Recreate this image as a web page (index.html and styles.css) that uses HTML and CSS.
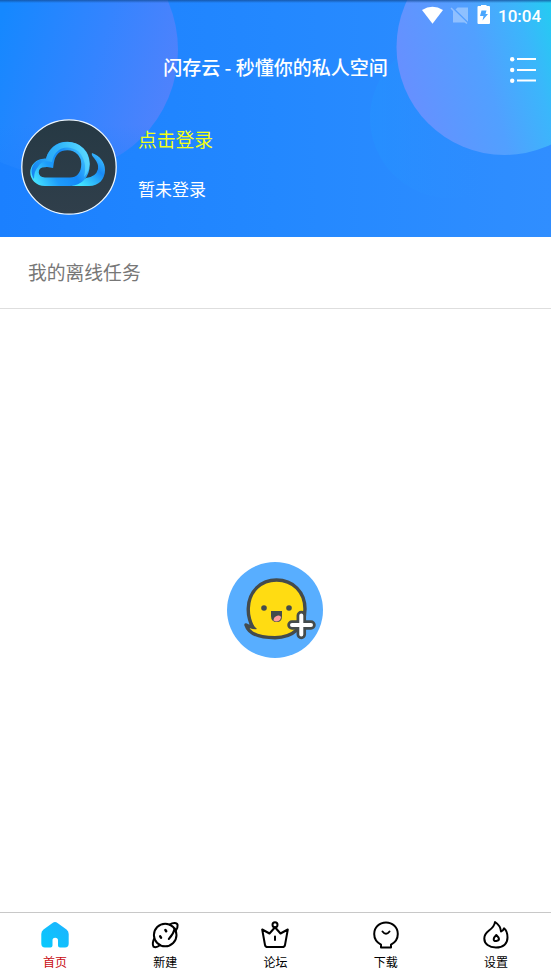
FILE: index.html
```html
<!DOCTYPE html>
<html lang="zh-CN">
<head>
<meta charset="utf-8">
<title>闪存云</title>
<link rel="stylesheet" href="styles.css">
</head>
<body>
<header class="hero">
  <svg class="hero-art" viewBox="0 0 551 237" aria-hidden="true">
    <defs>
      <linearGradient id="base" x1="0" y1="0" x2="1" y2="0"><stop offset="0" stop-color="#1b80ff"/><stop offset=".5" stop-color="#2388ff"/><stop offset="1" stop-color="#308eff"/></linearGradient>
      <linearGradient id="leftOrb" gradientUnits="userSpaceOnUse" x1="0" y1="20" x2="178" y2="75"><stop offset="0" stop-color="#1588ff"/><stop offset=".55" stop-color="#3484ff"/><stop offset="1" stop-color="#4f82fc"/></linearGradient>
      <linearGradient id="rightOrb" gradientUnits="userSpaceOnUse" x1="405" y1="85" x2="560" y2="40"><stop offset="0" stop-color="#6690ff"/><stop offset=".5" stop-color="#51a0ff"/><stop offset=".8" stop-color="#3bb6fb"/><stop offset="1" stop-color="#25cbf2"/></linearGradient>
      <linearGradient id="faintOrb" x1="0" y1="0" x2="1" y2="0"><stop offset="0" stop-color="#2494ff" stop-opacity=".45"/><stop offset=".7" stop-color="#2f90ff" stop-opacity="0"/></linearGradient>
      <linearGradient id="leftFade" x1="0" y1="0" x2="0" y2="1"><stop offset=".8" stop-color="#1b80ff" stop-opacity="0"/><stop offset="1" stop-color="#1b80ff" stop-opacity=".5"/></linearGradient>
      <linearGradient id="shade" x1="0" y1="0" x2="0" y2="1"><stop offset="0" stop-color="#124a93" stop-opacity=".75"/><stop offset="1" stop-color="#124a93" stop-opacity="0"/></linearGradient>
    </defs>
    <rect width="551" height="237" fill="url(#base)"/>
    <circle cx="54" cy="50" r="124" fill="url(#leftOrb)"/>
    <circle cx="54" cy="50" r="124" fill="url(#leftFade)"/>
    <circle cx="450" cy="118" r="80" fill="url(#faintOrb)"/>
    <circle cx="504.500" cy="47" r="108" fill="url(#rightOrb)"/>
    <rect width="551" height="3" fill="url(#shade)"/>
  </svg>
  <div class="status">
    <svg width="72" height="20" viewBox="0 0 72 20" fill="#fff">
      <path d="M0 5Q10.500-1.500 21 5L10.500 18.800Z"/>
      <path opacity=".35" d="M33.500 4.500l2-2H46v14.300zM28.500 3.500l1-1 16 15.500-1 1-2-1.500H31V6z"/>
      <path fill-rule="evenodd" d="M59 1h-2.500a1 1 0 0 0-1 1v16a1 1 0 0 0 1 1h10.500a1 1 0 0 0 1-1V2a1 1 0 0 0-1-1H64.500v-1H59zM59.500 5.500h5L63.500 9H66l-5.500 6.500 1-4.500H58z"/>
    </svg>
    <span class="clock">10:04</span>
  </div>
  <div class="titlebar">
    <h1 class="title">闪存云 - 秒懂你的私人空间</h1>
    <svg class="menu" width="28" height="28" viewBox="0 0 28 28" fill="#fff">
      <circle cx="3.200" cy="3.200" r="2.200"/><circle cx="3.200" cy="14" r="2.200"/><circle cx="3.200" cy="24.800" r="2.200"/>
      <path d="M8 2h19v2H8zM8 13h19v2H8zM8 23.600h19v2H8z"/>
    </svg>
  </div>
  <div class="profile">
    <svg class="avatar" width="96" height="96" viewBox="0 0 96 96">
      <defs>
        <linearGradient id="disc" x1="0" y1="0" x2="0" y2="1"><stop offset="0" stop-color="#263944"/><stop offset="1" stop-color="#303f4b"/></linearGradient>
        <linearGradient id="cloud" gradientUnits="userSpaceOnUse" x1="14" y1="66" x2="66" y2="35"><stop offset="0" stop-color="#48e7ff"/><stop offset=".35" stop-color="#1e9cfa"/><stop offset=".65" stop-color="#1588f7"/><stop offset="1" stop-color="#45caff"/></linearGradient>
        <linearGradient id="crest" gradientUnits="userSpaceOnUse" x1="10" y1="56" x2="68" y2="40"><stop offset="0" stop-color="#0869ef"/><stop offset=".35" stop-color="#2fb0f8"/><stop offset=".65" stop-color="#3cc4fb"/><stop offset="1" stop-color="#5fdcff"/></linearGradient>
        <linearGradient id="tail" gradientUnits="userSpaceOnUse" x1="60" y1="66" x2="84" y2="38"><stop offset="0" stop-color="#42e4ff"/><stop offset=".6" stop-color="#1889f6"/><stop offset="1" stop-color="#41c6ff"/></linearGradient>
      </defs>
      <circle cx="48" cy="48" r="47.200" fill="url(#disc)" stroke="#edf7ff" stroke-width="1.300"/>
      <path d="M50 67H68C78 67 84 60 84 51C84 43 79 37 71 34Q70 36 73 39Q78 45 77 50Q75 58 65 59Z" fill="url(#tail)"/>
      <path d="M49 62.700H24C10 62.700 10 44 24 44Q26 43.500 28.500 44C30 33 37 27 46.500 27C57 27 64.500 35 64.500 45C64.500 56 58 62.700 49 62.700Z" fill="none" stroke="url(#cloud)" stroke-width="8.500"/>
      <path d="M13 60C7 50 13 40 25 39.500C28 29 36 23 46.500 23C58 23 68 32 68.500 45Q68 53 63 58Q67 42 57 32C45 24 33 30 31 43Q21 40 17 48Q13 52 13 60Z" fill="url(#crest)" fill-opacity=".8"/>
    </svg>
    <div class="account"><a class="login">点击登录</a><p class="state">暂未登录</p></div>
  </div>
</header>
<main class="content">
  <h2 class="section">我的离线任务</h2>
  <div class="empty">
    <svg width="96" height="96" viewBox="0 0 96 96">
      <circle cx="48" cy="48" r="48" fill="#58aeff"/>
      <path d="M22.500 57Q21 52 21.300 46C22 29 34 18 49.500 18C66 18 78 30 78 47C78 65 66 75.700 48 75.700C35 75.700 22 73 19 63Q22 65 25.500 64.500Q23.500 61 22.500 57Z" fill="#ffdc12" stroke="#444b4c" stroke-width="3.400" stroke-linejoin="round"/>
      <path d="M20 63.500Q24 68 30 67L26 63Z" fill="#444b4c"/>
      <circle cx="37" cy="46" r="2.800" fill="#444b4c"/><circle cx="62" cy="46" r="2.800" fill="#444b4c"/>
      <path d="M44 49h11v5q0 6-5 6q-6 0-6-6z" fill="#444b4c"/>
      <path d="M46.500 58.500q0-4 4.500-5q3-.3 3 2q-1 4-5 4z" fill="#ff9c9d"/>
      <path d="M74.300 53.500v19M65 63h19" stroke="#444b4c" stroke-width="9.500" stroke-linecap="round"/>
      <path d="M74.300 53.500v19M65 63h19" stroke="#fff" stroke-width="4" stroke-linecap="round"/>
    </svg>
  </div>
</main>
<nav class="tabs">
  <a class="tab active">
    <svg width="32" height="32" viewBox="0 0 32 32"><defs><linearGradient id="home" x1="0" y1="1" x2="1" y2="0"><stop stop-color="#08cafc"/><stop offset="1" stop-color="#1eb2ff"/></linearGradient></defs>
    <path d="M4.500 10.500L13.500 4Q16 2 18.500 4L27.500 10.500Q29.700 12.200 29.700 15V24.500Q29.700 28.500 26 28.500H21Q19 28.500 19 26.500V21.500Q19 18.800 16.200 18.800T13.500 21.500V26.500Q13.500 28.500 11.500 28.500H6Q2.300 28.500 2.300 24.500V15Q2.300 12.200 4.500 10.500Z" fill="url(#home)"/></svg>
    <span>首页</span>
  </a>
  <a class="tab">
    <svg class="line" width="32" height="32" viewBox="0 0 32 32"><circle cx="16.200" cy="16" r="11.300"/><path d="M20.500 5.600C24 3.500 28 3.500 28.600 6Q28.900 9 26.700 12M25.800 9.500Q24.500 15 19.800 20M5.300 19.500C3.700 22 3.300 26 4.500 27.600Q7 29.200 11 26.300"/><path stroke-width="2.500" d="M11.200 17.400l.8 1.200M16.400 11l.8 1.200"/></svg>
    <span>新建</span>
  </a>
  <a class="tab">
    <svg class="line" width="32" height="32" viewBox="0 0 32 32"><circle cx="16" cy="5.800" r="2.500"/><path d="M15.800 8.500L10.500 14.500L3.200 10.500L6 26Q6.400 28 8.500 28H23.500Q25.600 28 26 26L28.800 10.500L21.500 14.500L16.200 8.500M16 17.500V21"/></svg>
    <span>论坛</span>
  </a>
  <a class="tab">
    <svg class="line" width="32" height="32" viewBox="0 0 32 32"><path d="M11 28.500V25.700C7 23.500 4.200 20 4.200 15C4.200 8.300 9.300 3.500 16 3.500S27.800 8.300 27.800 15C27.800 20 25 23.500 21 25.700V28.500ZM12.500 12.500Q16 17 19.500 12.500"/></svg>
    <span>下载</span>
  </a>
  <a class="tab">
    <svg class="line" width="32" height="32" viewBox="0 0 32 32"><path d="M15 3Q14.500 7.500 9 11.500Q4.300 15 4.300 19.500C4.300 25 9 28.500 16 28.500S27.500 25 27.500 18.500Q27.500 12 24 9.300Q23 12 21 12.500Q20.500 6.500 15 3Z"/><path d="M16.300 16Q19 18.500 19 20T16.300 22T13.700 20Q13.700 18.500 16.300 16Z"/></svg>
    <span>设置</span>
  </a>
</nav>
</body>
</html>
```
FILE: styles.css
```css
* { box-sizing: border-box; }

body {
  display: flex;
  flex-direction: column;
  height: 979px;
  margin: 0;
  background: #fff;
  font-family: Roboto, "Noto Sans CJK SC", sans-serif;
}

h1, h2, p { margin: 0; }
svg { display: block; flex: none; }

.hero {
  position: relative;
  isolation: isolate;
  flex: none;
  height: 237px;
  color: #fff;
}

.hero-art {
  position: absolute;
  z-index: -1;
  inset: 0;
  width: 100%;
  height: 237px;
}

.status {
  display: flex;
  justify-content: flex-end;
  gap: 4px;
  height: 38px;
  padding: 5px 10px 0 0;
}

.clock {
  width: 43px;
  font-size: 17px;
  font-weight: 500;
  line-height: 22px;
  white-space: nowrap;
}

.titlebar {
  display: grid;
  grid-template-columns: 40px 1fr 40px;
  align-items: center;
  height: 62px;
  padding-top: 1px;
}

.title {
  grid-column: 2;
  padding-bottom: 5px;
  text-align: center;
  font-family: "Noto Sans CJK SC", sans-serif;
  font-size: 19px;
  font-weight: 500;
  line-height: 28px;
  white-space: nowrap;
}

.menu { margin-left: -2px; }

.profile {
  display: flex;
  gap: 21px;
  padding: 19px 0 0 21px;
}

.account { padding-top: 8px; }

.login {
  display: block;
  color: #f4ff16;
  font-size: 18.800px;
  line-height: 28px;
}

.state {
  margin-top: 22px;
  font-size: 17px;
  line-height: 26px;
}

.content {
  display: flex;
  flex: 1;
  flex-direction: column;
}

.section {
  height: 72px;
  padding: 2px 0 0 28px;
  border-bottom: 1px solid #dedede;
  color: #777;
  font-size: 18.800px;
  font-weight: 400;
  line-height: 71px;
}

.empty {
  display: flex;
  flex: 1;
  align-items: center;
  justify-content: center;
  padding: 0 1px 1px 0;
}

.tabs {
  display: grid;
  grid-template-columns: repeat(5, 1fr);
  flex: none;
  height: 67px;
  border-top: 1px solid #c8c8c8;
}

.tab {
  display: flex;
  flex-direction: column;
  align-items: center;
  padding-top: 6px;
  color: #000;
  font-size: 12px;
  font-weight: 400;
  line-height: 18px;
}

.tab span { margin-top: 3px; }
.active { color: #c80b12; }

.line {
  fill: none;
  stroke: #000;
  stroke-width: 2;
  stroke-linecap: round;
  stroke-linejoin: round;
}
```
